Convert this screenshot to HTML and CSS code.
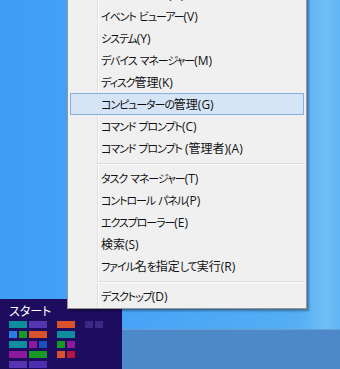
FILE: index.html
```html
<!DOCTYPE html>
<html lang="ja">
<head>
    <meta charset="UTF-8">
    <title>Win+X メニュー</title>
    <link rel="stylesheet" href="styles.css">
</head>
<body>
    <div class="desktop">
        <div class="taskbar"></div>

        <!-- Start screen thumbnail in the corner -->
        <div class="start-thumb">
            <div class="start-label">スタート</div>
            <div class="tiles">
                <div class="tile-group">
                    <span class="tile wide teal"></span>
                    <span class="tile wide violet"></span>
                    <span class="tile blue"></span>
                    <span class="tile green"></span>
                    <span class="tile wide orange"></span>
                    <span class="tile wide teal"></span>
                    <span class="tile magenta"></span>
                    <span class="tile navy"></span>
                    <span class="tile wide magenta"></span>
                    <span class="tile wide green"></span>
                    <span class="tile wide violet"></span>
                    <span class="tile wide indigo"></span>
                    <span class="tile wide blue"></span>
                    <span class="tile wide crimson"></span>
                </div>
                <div class="tile-group small">
                    <span class="tile wide orange"></span>
                    <span class="tile wide teal"></span>
                    <span class="tile green"></span>
                    <span class="tile magenta"></span>
                    <span class="tile orange"></span>
                    <span class="tile crimson"></span>
                </div>
                <div class="tile-group small">
                    <span class="tile dim"></span>
                    <span class="tile dim"></span>
                </div>
            </div>
        </div>

        <!-- Quick link menu (kana runs are set narrower, like Meiryo UI) -->
        <ul class="winx-menu">
            <li class="item">電源<span class="kana">オプション</span>(O)</li>
            <li class="item"><span class="kana">イベント</span> <span class="kana">ビューアー</span>(V)</li>
            <li class="item"><span class="kana">システム</span>(Y)</li>
            <li class="item"><span class="kana">デバイス</span> <span class="kana">マネージャー</span>(M)</li>
            <li class="item"><span class="kana">ディスク</span>管理(K)</li>
            <li class="item active"><span class="kana">コンピューターの</span>管理(G)</li>
            <li class="item"><span class="kana">コマンド</span> <span class="kana">プロンプト</span>(C)</li>
            <li class="item"><span class="kana">コマンド</span> <span class="kana">プロンプト</span> (管理者)(A)</li>
            <li class="separator"></li>
            <li class="item"><span class="kana">タスク</span> <span class="kana">マネージャー</span>(T)</li>
            <li class="item"><span class="kana">コントロール</span> <span class="kana">パネル</span>(P)</li>
            <li class="item"><span class="kana">エクスプローラー</span>(E)</li>
            <li class="item">検索(S)</li>
            <li class="item"><span class="kana">ファイル</span>名<span class="kana">を</span>指定<span class="kana">して</span>実行(R)</li>
            <li class="separator"></li>
            <li class="item"><span class="kana">デスクトップ</span>(D)</li>
        </ul>
    </div>
</body>
</html>
```

FILE: styles.css
```css
/* Desktop wallpaper */
body {
    margin: 0;
    font-family: "Noto Sans CJK JP", "Noto Sans", sans-serif;
}

.desktop {
    position: relative;
    width: 340px;
    height: 369px;
    overflow: hidden;
    background: linear-gradient(90deg, #3f9df5 0%, #47a4f6 40%, #56aef3 88%, #70bff6 96%, #60b4f3 100%);
}

.taskbar {
    position: absolute;
    left: 0;
    right: 0;
    bottom: 0;
    height: 39px;
    background: #4d89c8;
    border-top: 1px solid #6b9fd3;
}

/* Start thumbnail */
.start-thumb {
    position: absolute;
    left: 0;
    top: 299px;
    width: 122px;
    height: 70px;
    overflow: hidden;
    background: #1e0c5e;
    padding: 3px 0 0 9px;
    box-sizing: border-box;
}

.start-label {
    color: #fff;
    font-size: 12px;
    line-height: 17px;
    height: 17px;
    font-feature-settings: "palt";
}

.tiles {
    display: flex;
    gap: 10px;
    margin-top: 2px;
}

.tile-group {
    display: grid;
    grid-template-columns: repeat(4, 8px);
    grid-auto-rows: 7px;
    column-gap: 2px;
    row-gap: 3px;
}

.tile-group.small {
    grid-template-columns: repeat(2, 8px);
}

.tile { display: block; }
.tile.wide { grid-column: span 2; }

.teal { background: #0e8d9c; }
.violet { background: #5536b0; }
.blue { background: #2b7de6; }
.green { background: #179a24; }
.orange { background: #d8522a; }
.magenta { background: #8d1a9c; }
.navy { background: #1e4fc0; }
.indigo { background: #4a2fae; }
.crimson { background: #b3173f; }
.dim { background: #3a2886; }

/* Win+X menu */
.winx-menu {
    position: absolute;
    left: 67px;
    top: -20px;
    width: 240px;
    box-sizing: border-box;
    margin: 0;
    padding: 2px 2px 1px;
    list-style: none;
    background-color: #f0f0f0;
    background-image: linear-gradient(90deg, transparent 29px, #e0e0e0 29px, #e0e0e0 30px, #fbfbfb 30px, #fbfbfb 31px, transparent 31px);
    border: 1px solid #979797;
    box-shadow: 2px 2px 2px rgba(0, 0, 0, 0.35);
}

.item {
    height: 22px;
    line-height: 21px;
    padding-left: 30px;
    box-sizing: border-box;
    border: 1px solid transparent;
    font-family: "Open Sans", "Noto Sans CJK JP", sans-serif;
    font-size: 12px;
    color: #111;
    white-space: nowrap;
    font-feature-settings: "palt";
}

.item .kana {
    font-family: "Noto Sans CJK JP", sans-serif;
    font-size: 11px;
    letter-spacing: -1.1px;
}

.item.active {
    background: #d6e5f6;
    border-color: #89addd;
}

.separator {
    height: 8px;
    margin-left: 27px;
    background:
        linear-gradient(#dcdcdc, #dcdcdc) 0 4px / 100% 1px no-repeat,
        linear-gradient(#fbfbfb, #fbfbfb) 0 5px / 100% 1px no-repeat;
}
```
